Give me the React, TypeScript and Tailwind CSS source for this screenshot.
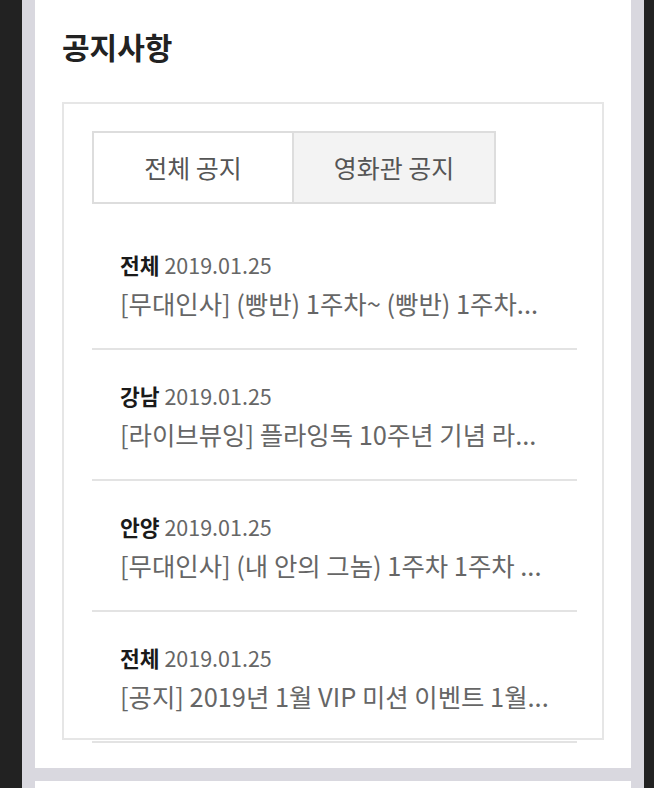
import React from "react";

const items = [
  { area: "전체", date: "2019.01.25", title: "[무대인사] (빵반) 1주차~ (빵반) 1주차..." },
  { area: "강남", date: "2019.01.25", title: "[라이브뷰잉] 플라잉독 10주년 기념 라..." },
  { area: "안양", date: "2019.01.25", title: "[무대인사] (내 안의 그놈) 1주차 1주차 ..." },
  { area: "전체", date: "2019.01.25", title: "[공지] 2019년 1월 VIP 미션 이벤트 1월..." },
];

export default function App() {
  return (
    <div
      className="w-full h-[788px] overflow-hidden bg-[#222222] pl-[22px] pr-[10px]"
      style={{ fontFamily: '"Noto Sans CJK KR", "Noto Sans", sans-serif' }}
    >
      <div className="h-full bg-[#d9d8df] px-[13px] flex flex-col gap-[13px]">
        <div className="bg-white pt-[24px] px-[27px] pb-[28px]">
          <h2 className="text-[30px] leading-[44px] font-bold text-[#222]">공지사항</h2>
          <div className="mt-[34px] border-2 border-[#e6e6e6] pt-[27px] pl-[28px] pr-[25px]">
            <div className="flex">
              <div className="w-[202px] h-[73px] border-2 border-[#dddddd] bg-white flex items-center justify-center text-[25px] text-[#555]">
                전체 공지
              </div>
              <div className="w-[202px] h-[73px] border-2 border-l-0 border-[#dddddd] bg-[#f3f3f3] flex items-center justify-center text-[25px] text-[#555]">
                영화관 공지
              </div>
            </div>
            <ul className="mt-[15px] mb-[-5px]">
              {items.map((it, i) => (
                <li key={i} className="px-[28px] pt-[30px] pb-[23px] border-b-2 border-[#e3e3e3]">
                  <div className="text-[21.5px] leading-[32px] text-[#666]">
                    <span className="font-bold text-[#1a1a1a]">{it.area}</span> {it.date}
                  </div>
                  <div className="text-[25.4px] leading-[44px] text-[#666] whitespace-nowrap">
                    {it.title}
                  </div>
                </li>
              ))}
            </ul>
          </div>
        </div>
        <div className="bg-white flex-1" />
      </div>
    </div>
  );
}
